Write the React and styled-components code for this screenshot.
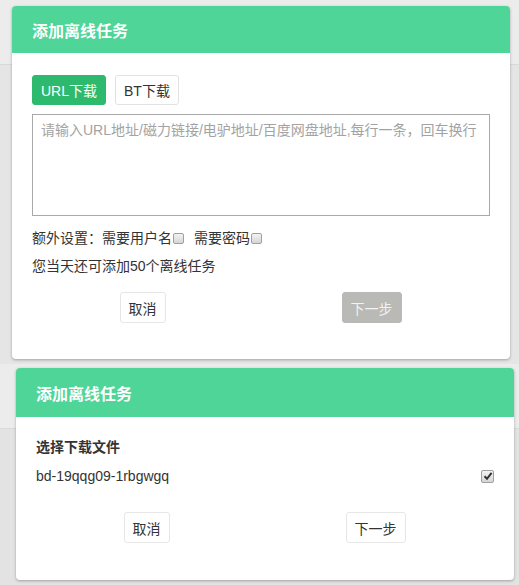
import styled, { createGlobalStyle } from "styled-components";

const GlobalStyle = createGlobalStyle`
  body {
    margin: 0;
    background: #e3e3e3;
    font-family: "Liberation Sans", "Noto Sans CJK SC", sans-serif;
    color: #333;
  }
`;

const Check = ({ checked }) => (
  <CheckBox $checked={checked}>
    {checked && (
      <svg width="10" height="10" viewBox="0 0 10 10">
        <path d="M1.5 5.2 L4 7.8 L8.6 1.8" fill="none" stroke="#333" strokeWidth="2" />
      </svg>
    )}
  </CheckBox>
);

const App = () => {
  return (
    <>
      <GlobalStyle />
      <Shot $height={364} $bg="#e5e5e5">
        <PageBar />
        <Dialog $top={6} $left={12}>
          <Header $height={47}>添加离线任务</Header>
          <Body $pad="22px 20px 36px">
            <Tabs>
              <Tab $active>URL下载</Tab>
              <Tab>BT下载</Tab>
            </Tabs>
            <LinkInput placeholder="请输入URL地址/磁力链接/电驴地址/百度网盘地址,每行一条，回车换行" />
            <Options>
              额外设置：需要用户名
              <Check />
              <Spacer />
              需要密码
              <Check />
            </Options>
            <Quota>您当天还可添加50个离线任务</Quota>
            <Actions $top={16}>
              <ActionButton>取消</ActionButton>
              <ActionButton $disabled>下一步</ActionButton>
            </Actions>
          </Body>
        </Dialog>
      </Shot>
      <Shot $height={221} $bg="#e3e3e3">
        <PageBar />
        <Dialog $top={4} $left={16}>
          <Header $height={49}>添加离线任务</Header>
          <Body $pad="20px 20px 37px">
            <Label>选择下载文件</Label>
            <FileRow>
              <span>bd-19qqg09-1rbgwgq</span>
              <Check checked />
            </FileRow>
            <Actions $top={26}>
              <ActionButton>取消</ActionButton>
              <ActionButton>下一步</ActionButton>
            </Actions>
          </Body>
        </Dialog>
      </Shot>
    </>
  );
};

const Shot = styled.div`
  position: relative;
  height: ${(p) => p.$height}px;
  background: ${(p) => p.$bg};
  overflow: hidden;
`;

const PageBar = styled.div`
  height: 64px;
  background: #ececec;
  border-bottom: 1px solid #d9d9d9;
`;

const Dialog = styled.div`
  position: absolute;
  top: ${(p) => p.$top}px;
  left: ${(p) => p.$left}px;
  width: 498px;
  background: #fff;
  border-radius: 4px;
  overflow: hidden;
  box-shadow: 0 1px 3px rgba(0, 0, 0, 0.3);
`;

const Header = styled.div`
  height: ${(p) => p.$height}px;
  display: flex;
  align-items: center;
  padding: 0 20px;
  background: #4fd597;
  color: #fff;
  font-size: 16px;
  font-weight: bold;
`;

const Body = styled.div`
  padding: ${(p) => p.$pad};
  font-size: 14px;
`;

const Tabs = styled.div`
  display: flex;
  gap: 9px;
`;

const Tab = styled.button`
  height: 30px;
  padding: 0 8px;
  font: inherit;
  font-size: 14px;
  border-radius: 3px;
  border: 1px solid ${(p) => (p.$active ? "#2dba6e" : "#e2e2e2")};
  background: ${(p) => (p.$active ? "#2dba6e" : "#fff")};
  color: ${(p) => (p.$active ? "#fff" : "#333")};
`;

const LinkInput = styled.textarea`
  display: block;
  box-sizing: border-box;
  width: 100%;
  height: 102px;
  margin-top: 9px;
  padding: 5px 8px;
  border: 1px solid #a9a9a9;
  font: inherit;
  font-size: 14px;
  line-height: 20px;
  resize: none;

  &::placeholder {
    color: #a3a3a3;
  }
`;

const Options = styled.div`
  display: flex;
  align-items: center;
  margin-top: 12px;
  line-height: 20px;
`;

const Spacer = styled.span`
  width: 10px;
`;

const CheckBox = styled.span`
  display: inline-flex;
  align-items: center;
  justify-content: center;
  box-sizing: border-box;
  width: ${(p) => (p.$checked ? 13 : 11)}px;
  height: ${(p) => (p.$checked ? 13 : 11)}px;
  margin-left: 1px;
  border: 1px solid #a0a0a0;
  border-radius: 2px;
  background: linear-gradient(#f2f2f2, #d6d6d6);
`;

const Quota = styled.div`
  margin-top: 8px;
  line-height: 20px;
`;

const Actions = styled.div`
  display: grid;
  grid-template-columns: 1fr 1fr;
  justify-items: center;
  margin: ${(p) => p.$top}px 4px 0 -4px;
`;

const ActionButton = styled.button`
  height: 31px;
  padding: 0 8px;
  font: inherit;
  font-size: 14px;
  border-radius: 3px;
  border: 1px solid ${(p) => (p.$disabled ? "#b9b9b5" : "#e6e6e6")};
  background: ${(p) => (p.$disabled ? "#b9b9b5" : "#fff")};
  color: ${(p) => (p.$disabled ? "#f2f2f2" : "#333")};
`;

const Label = styled.div`
  font-weight: bold;
  line-height: 20px;
`;

const FileRow = styled.div`
  display: flex;
  align-items: center;
  justify-content: space-between;
  margin-top: 9px;
  line-height: 20px;
`;

export default App;
